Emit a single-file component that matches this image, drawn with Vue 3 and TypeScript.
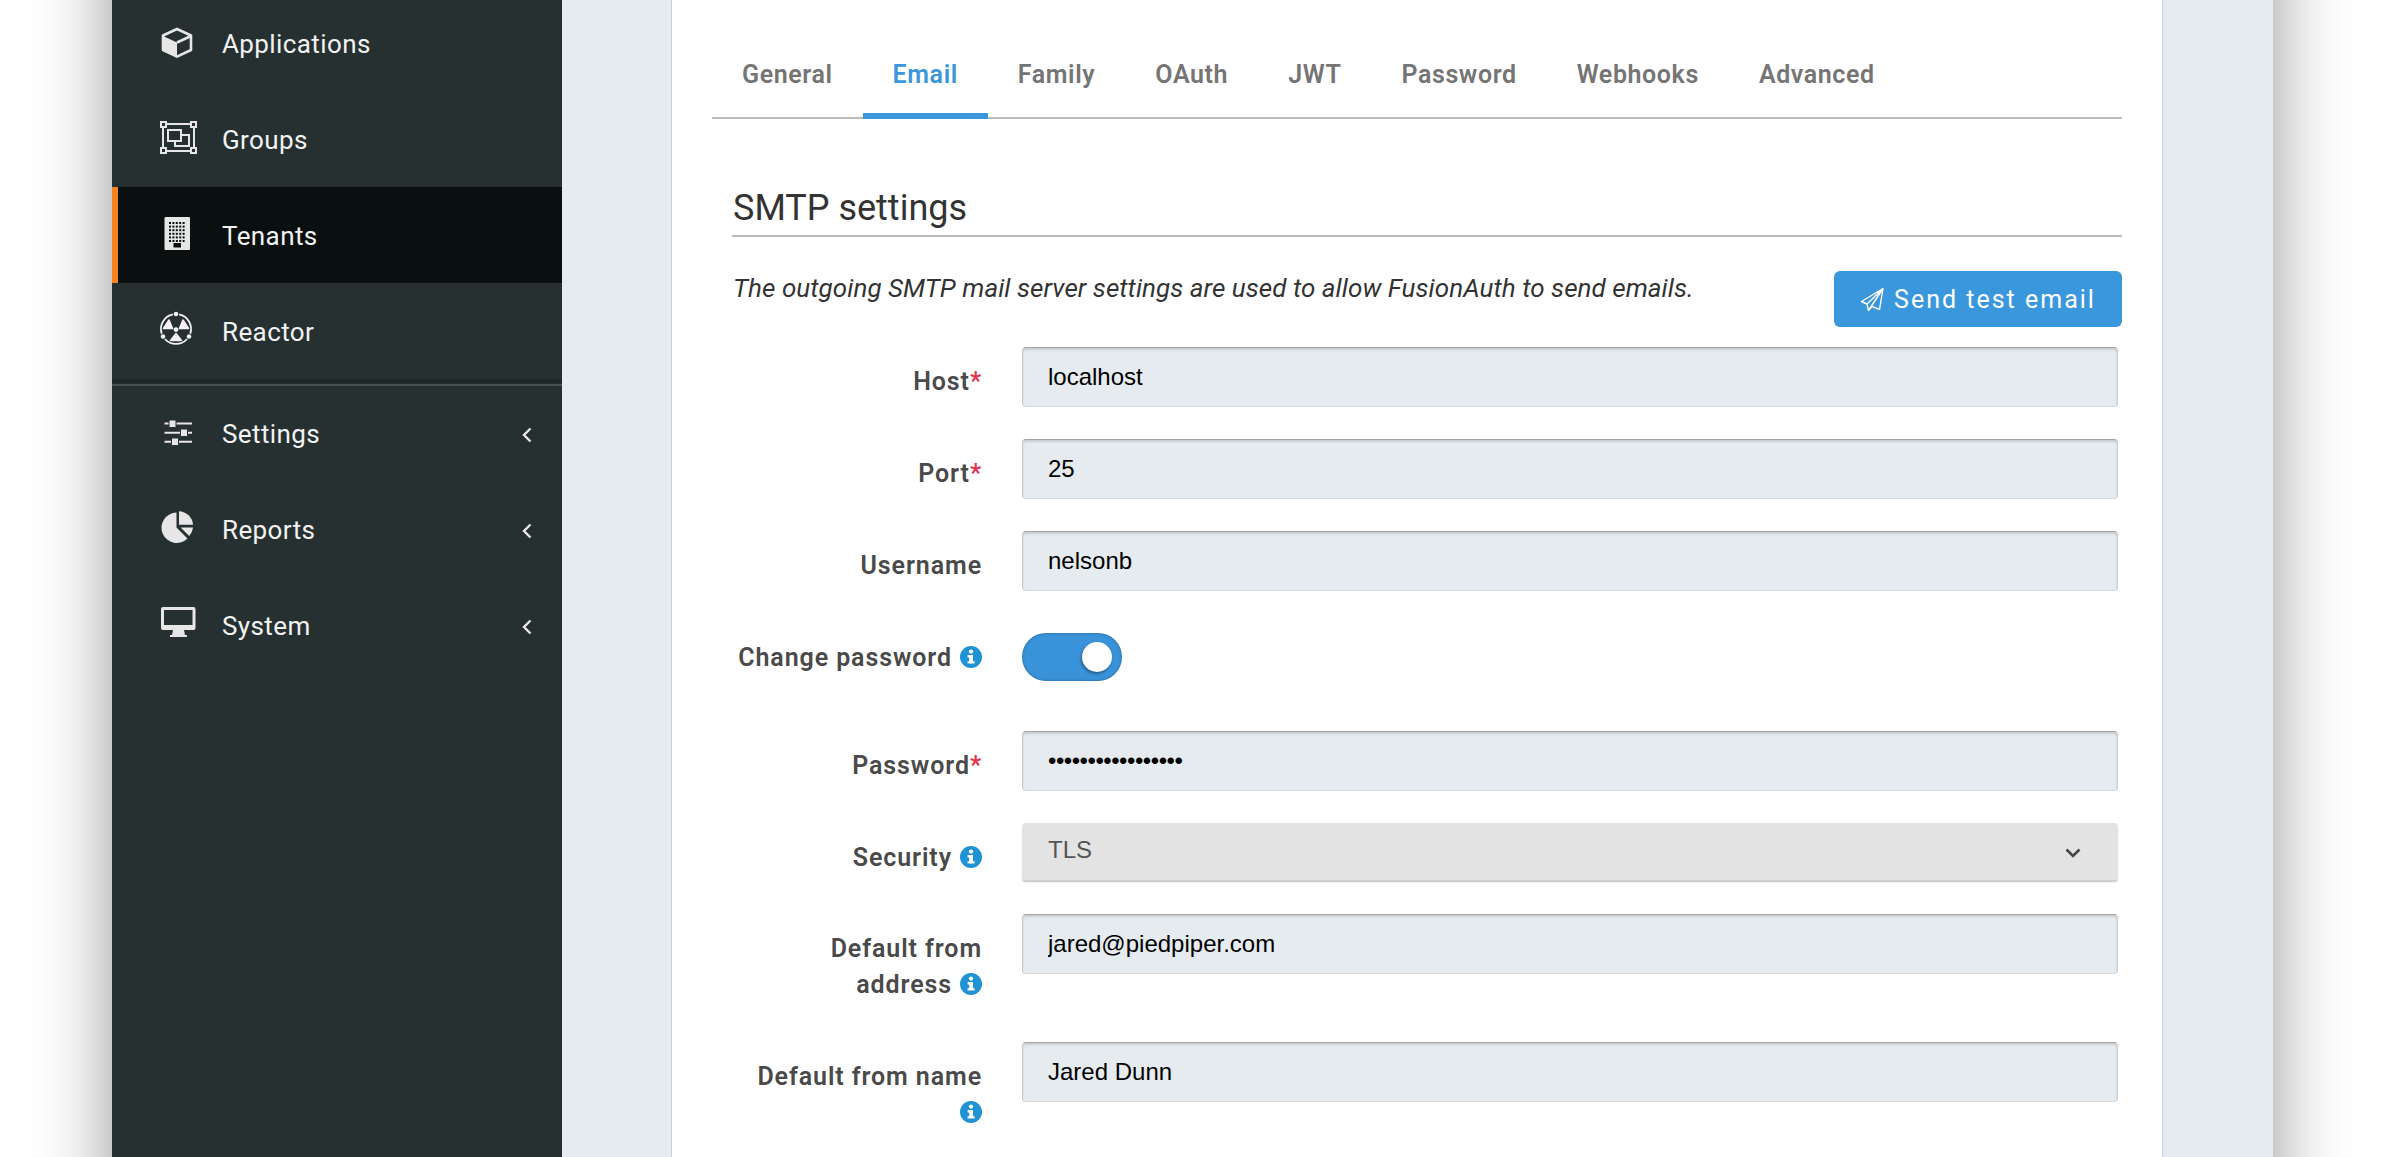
<script setup lang="ts">
interface NavItem {
  label: string
  icon: string
  active?: boolean
  submenu?: boolean
}

interface Field {
  label: string
  second?: string
  required?: boolean
  info?: boolean
  type: 'text' | 'password' | 'toggle' | 'select'
  value?: string
  tall?: boolean
}

const topNav: NavItem[] = [
  { label: 'Applications', icon: 'cube' },
  { label: 'Groups', icon: 'groups' },
  { label: 'Tenants', icon: 'building', active: true },
  { label: 'Reactor', icon: 'reactor' },
]

const bottomNav: NavItem[] = [
  { label: 'Settings', icon: 'sliders', submenu: true },
  { label: 'Reports', icon: 'pie', submenu: true },
  { label: 'System', icon: 'desktop', submenu: true },
]

const tabs = ['General', 'Email', 'Family', 'OAuth', 'JWT', 'Password', 'Webhooks', 'Advanced']

const fields: Field[] = [
  { label: 'Host', required: true, type: 'text', value: 'localhost' },
  { label: 'Port', required: true, type: 'text', value: '25' },
  { label: 'Username', type: 'text', value: 'nelsonb' },
  { label: 'Change password', info: true, type: 'toggle' },
  { label: 'Password', required: true, type: 'password', value: 'abcdefghijklmnopq' },
  { label: 'Security', info: true, type: 'select', value: 'TLS' },
  { label: 'Default from', second: 'address', info: true, type: 'text', value: 'jared@piedpiper.com', tall: true },
  { label: 'Default from name', second: '', info: true, type: 'text', value: 'Jared Dunn', tall: true },
]

// building icon window grid
const dots: { x: number; y: number }[] = []
for (let r = 0; r < 6; r++) {
  for (let c = 0; c < 5; c++) dots.push({ x: 12 + c * 3.4, y: 7 + r * 3.6 })
}
</script>

<template>
  <div class="page">
    <div class="window">
      <aside class="sidebar">
        <nav class="nav-top">
          <a v-for="item in topNav" :key="item.label" class="nav-item" :class="{ active: item.active }">
            <svg class="nav-icon" viewBox="0 0 40 40">
              <template v-if="item.icon === 'cube'">
                <path d="M20 6 34 12.5V27L20 33.6 6 27V12.5Z" fill="none" stroke="#e6e6e6" stroke-width="2.6" stroke-linejoin="round" />
                <path d="M6 13 20 19.5V34L5 27Z" fill="#e6e6e6" />
                <path d="M20 19.5 34 13" stroke="#e6e6e6" stroke-width="2.6" />
              </template>
              <template v-else-if="item.icon === 'groups'">
                <g fill="none" stroke="#e6e6e6" stroke-width="2">
                  <path d="M8 5H35M8 32H35M6 7V30M37 7V30" />
                  <rect x="4" y="3" width="5" height="5" />
                  <rect x="34" y="3" width="5" height="5" />
                  <rect x="4" y="29" width="5" height="5" />
                  <rect x="34" y="29" width="5" height="5" />
                  <rect x="11" y="11" width="13" height="11" />
                  <path d="M24 16H32V27H18V22" />
                </g>
              </template>
              <template v-else-if="item.icon === 'building'">
                <rect x="7.5" y="2" width="25.5" height="33" rx="1" fill="#e6e6e6" />
                <rect v-for="(d, i) in dots" :key="i" :x="d.x" :y="d.y" width="2" height="2" fill="#0a0f0f" />
                <rect x="16.5" y="28" width="7.5" height="4.5" fill="#0a0f0f" />
              </template>
              <template v-else-if="item.icon === 'reactor'">
                <path d="M22.1 3.3A15 15 0 0 1 33.3 22.6M30.1 28A15 15 0 0 1 7.9 28M4.7 22.6A15 15 0 0 1 15.9 3.3" fill="none" stroke="#f2f2f2" stroke-width="1.8" />
                <g fill="#f2f2f2" stroke="#f2f2f2" stroke-width="1.6" stroke-linejoin="round">
                  <path d="M12 9 6.5 17.5H15.5Z" />
                  <path d="M26 9 22.5 17.5H31.5Z" />
                  <path d="M19 22.5 13.5 29.5H24.5Z" />
                </g>
                <circle cx="19" cy="18.6" r="2.4" fill="#f2f2f2" />
                <circle cx="19" cy="3" r="2.3" fill="#f2f2f2" />
                <circle cx="32" cy="25.5" r="2.3" fill="#f2f2f2" />
                <circle cx="6" cy="25.5" r="2.3" fill="#f2f2f2" />
              </template>
            </svg>
            <span class="nav-label">{{ item.label }}</span>
          </a>
        </nav>
        <div class="nav-divider"></div>
        <nav class="nav-bottom">
          <a v-for="item in bottomNav" :key="item.label" class="nav-item">
            <svg class="nav-icon" viewBox="0 0 40 40">
              <template v-if="item.icon === 'sliders'">
                <path d="M7.5 9.5H35M7.5 18.7H35M7.5 27.7H35" stroke="#e6e6e6" stroke-width="2" />
                <rect x="12" y="6" width="7" height="7.5" rx="1" fill="#e6e6e6" stroke="#263031" />
                <rect x="23.5" y="15" width="7" height="7.5" rx="1" fill="#e6e6e6" stroke="#263031" />
                <rect x="14.5" y="24" width="7" height="7.5" rx="1" fill="#e6e6e6" stroke="#263031" />
              </template>
              <template v-else-if="item.icon === 'pie'">
                <path d="M19.5 2.5A15.2 15.2 0 1 0 30.5 28.4L19.5 17.5Z" fill="#e6e6e6" />
                <path d="M22 1.2A14.6 14.6 0 0 1 36 14.8H22Z" fill="#e6e6e6" />
                <path d="M23.6 17.4H36A15 15 0 0 1 32.2 26Z" fill="#e6e6e6" />
              </template>
              <template v-else>
                <path fill-rule="evenodd" fill="#e6e6e6" d="M6 1H36.5A2 2 0 0 1 38.5 3V22A2 2 0 0 1 36.5 24H27L28 29H30V31H13V29H15L16 24H6A2 2 0 0 1 4 22V3A2 2 0 0 1 6 1ZM7 4V19H35.5V4Z" />
              </template>
            </svg>
            <span class="nav-label">{{ item.label }}</span>
            <svg class="nav-chevron" viewBox="0 0 10 16">
              <path d="M8.5 1.5 2 8 8.5 14.5" fill="none" stroke="#e8e8e8" stroke-width="2.4" />
            </svg>
          </a>
        </nav>
      </aside>

      <main class="content">
        <div class="card">
          <div class="tabs">
            <a v-for="tab in tabs" :key="tab" class="tab" :class="{ current: tab === 'Email' }">{{ tab }}</a>
          </div>

          <section class="section">
            <h2 class="section-title">SMTP settings</h2>
            <div class="intro">
              <p><em>The outgoing SMTP mail server settings are used to allow FusionAuth to send emails.</em></p>
              <button type="button" class="send-btn">
                <svg class="plane" viewBox="0 0 24 25">
                  <path d="M23 1.5 1.5 14.5 7 17 8.5 23.5 12 19.5 19.5 22.5ZM23 1.5 7 17M23 1.5 8.5 23.5" fill="none" stroke="#fff" stroke-width="1.4" stroke-linejoin="round" />
                </svg>
                Send test email
              </button>
            </div>

            <div class="form">
              <div v-for="f in fields" :key="f.label" class="row" :class="{ tall: f.tall, 'toggle-row': f.type === 'toggle' }">
                <label class="row-label">
                  {{ f.label }}<span v-if="f.required" class="req">*</span>
                  <template v-if="f.second !== undefined"><br />{{ f.second }}</template>
                  <svg v-if="f.info" class="info" viewBox="0 0 22 22">
                    <circle cx="11" cy="11" r="11" fill="#1f93d3" />
                    <circle cx="11" cy="5.6" r="2.1" fill="#fff" />
                    <path d="M7.6 9H13V15.2H14.6V17.6H7.6V15.2H9.2V11.4H7.6Z" fill="#fff" />
                  </svg>
                </label>
                <div class="row-control">
                  <div v-if="f.type === 'toggle'" class="switch"><span class="knob"></span></div>
                  <div v-else-if="f.type === 'select'" class="select">
                    <span>{{ f.value }}</span>
                    <svg class="select-arrow" viewBox="0 0 16 10">
                      <path d="M1.5 1.5 8 8 14.5 1.5" fill="none" stroke="#444" stroke-width="2.6" />
                    </svg>
                  </div>
                  <input v-else class="field" :class="{ secret: f.type === 'password' }" :type="f.type" :value="f.value" readonly />
                </div>
              </div>
            </div>
          </section>
        </div>
      </main>
    </div>
  </div>
</template>

<style scoped>
.page {
  height: 1157px;
  overflow: hidden;
  padding: 0 111px 0 112px;
  font-family: Roboto, "Noto Sans", sans-serif;
}

/* runs past the top and bottom of the shot so the shadow stays even */
.window {
  display: flex;
  height: 1357px;
  margin-top: -100px;
  background: #e6ebef;
  box-shadow: 0 0 70px rgba(0, 0, 0, 0.42);
}

.sidebar {
  flex: 0 0 450px;
  background: #263031;
  color: #fff;
}

.nav-top {
  margin-top: 95px;
}

.nav-item {
  display: flex;
  align-items: center;
  height: 96px;
  padding-left: 45px;
  font-size: 26px;
  letter-spacing: 0.4px;
  color: #f2f2f2;
}

.nav-item.active {
  background: #0a0f0f;
  border-left: 6px solid #f58320;
  padding-left: 39px;
}

.nav-icon {
  width: 40px;
  height: 40px;
  flex: none;
  margin-right: 25px;
}

.nav-label {
  flex: 1;
  margin-top: 2px;
}

.nav-bottom .nav-label {
  margin-top: 0;
}

.nav-chevron {
  width: 10px;
  height: 16px;
  margin: 2px 30px 0 0;
}

.nav-divider {
  height: 7px;
  border-top: 4px solid #1f272a;
  border-bottom: 2px solid #475052;
  box-sizing: border-box;
}

.content {
  flex: 1;
  padding: 100px 110px 0 109px;
}

.card {
  height: 100%;
  background: #fff;
  border-left: 1px solid #c9cfd4;
  border-right: 1px solid #c9cfd4;
  padding: 0 40px;
  box-sizing: border-box;
}

.tabs {
  display: flex;
  height: 119px;
  border-bottom: 2px solid #bcbcbc;
  box-sizing: border-box;
  padding-top: 54px;
}

.tab {
  height: 63px;
  padding: 0 30px;
  font-size: 25px;
  line-height: 42px;
  font-weight: 600;
  letter-spacing: 0.6px;
  color: #757575;
  box-sizing: border-box;
}

.tab.current {
  color: #3a97dc;
  border-bottom: 6px solid #3a97dc;
  height: 65px;
}

.section {
  padding-left: 20px;
}

.section-title {
  margin: 0;
  padding: 62px 0 0 1px;
  height: 118px;
  box-sizing: border-box;
  font-size: 36px;
  line-height: 54px;
  font-weight: 400;
  color: #333;
  border-bottom: 2px solid #bcbcbc;
}

.intro {
  display: flex;
  justify-content: space-between;
  align-items: flex-start;
  padding-top: 34px;
  height: 110px;
  box-sizing: border-box;
}

.intro p {
  margin: 0;
  padding: 0 0 0 1px;
  font-size: 26px;
  line-height: 35px;
  letter-spacing: 0.05px;
  color: #333;
}

.send-btn {
  width: 288px;
  height: 56px;
  display: flex;
  align-items: center;
  justify-content: center;
  gap: 10px;
  border: 0;
  border-radius: 6px;
  background: #3a97dc;
  color: #fff;
  font-family: Roboto, sans-serif;
  font-size: 25px;
  letter-spacing: 2px;
  margin: 0;
}

.plane {
  width: 24px;
  height: 25px;
}

.row {
  display: flex;
  margin-bottom: 32px;
  margin-right: 4px;
}

.row.tall {
  min-height: 96px;
}

.row.toggle-row {
  padding-top: 10px;
  min-height: 66px;
}

.row-label {
  flex: 0 0 250px;
  text-align: right;
  padding-top: 17px;
  font-size: 25px;
  line-height: 36px;
  font-weight: 600;
  letter-spacing: 0.9px;
  color: #4a4a4a;
  box-sizing: border-box;
}

.toggle-row .row-label {
  padding-top: 7px;
}

.req {
  color: #e8304f;
}

.info {
  width: 22px;
  height: 22px;
  margin-left: 8px;
  vertical-align: -2px;
}

.row-control {
  flex: 1;
  margin-left: 40px;
}

.field {
  display: block;
  width: 100%;
  height: 60px;
  box-sizing: border-box;
  padding: 0 25px;
  border: 1px solid #d5dade;
  border-top-color: #9ea3a7;
  border-right-color: #c5cacf;
  border-left-color: #c5cacf;
  border-radius: 4px;
  background: #e6ebef;
  box-shadow: inset 0 2px 2px rgba(0, 0, 0, 0.12);
  font-family: "Liberation Sans", Arial, sans-serif;
  font-size: 24px;
  color: #000;
  outline: none;
}

.field.secret {
  letter-spacing: -0.5px;
}

.select {
  display: flex;
  align-items: center;
  justify-content: space-between;
  height: 59px;
  box-sizing: border-box;
  padding: 0 37px 0 26px;
  border-radius: 4px;
  background: #e3e3e3;
  border-bottom: 2px solid #cfcfcf;
  box-shadow: 0 1px 2px rgba(0, 0, 0, 0.08);
  font-family: "Liberation Sans", Arial, sans-serif;
  font-size: 24px;
  color: #555;
}

.select span {
  margin-top: -3px;
}

.select-arrow {
  width: 16px;
  height: 10px;
  margin-top: 3px;
}

.switch {
  width: 100px;
  height: 48px;
  border-radius: 24px;
  background: #3a92d8;
  box-shadow: inset 0 0 3px rgba(0, 0, 0, 0.3);
  display: flex;
  align-items: center;
  justify-content: flex-end;
  padding-right: 10px;
  box-sizing: border-box;
}

.knob {
  width: 30px;
  height: 30px;
  border-radius: 50%;
  background: #fff;
  box-shadow: -1px 2px 3px rgba(0, 0, 0, 0.35);
}
</style>

<style>
html,
body {
  margin: 0;
  background: #fff;
}
</style>
